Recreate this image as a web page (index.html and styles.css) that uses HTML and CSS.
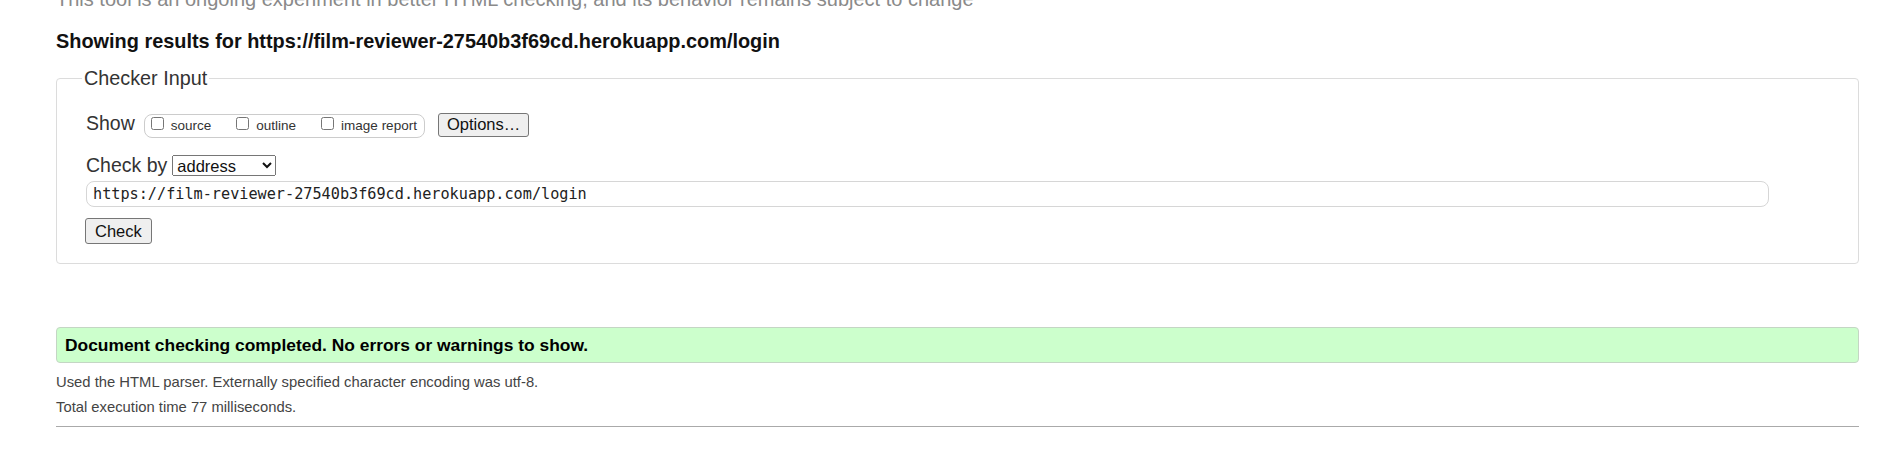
FILE: index.html
```html
<!DOCTYPE html>
<html lang="en">
<head>
<meta charset="utf-8">
<title>Nu Html Checker</title>
<link rel="stylesheet" href="styles.css">
</head>
<body>
<div class="page">
  <p class="intro">This tool is an ongoing experiment in better HTML checking, and its behavior remains subject to change</p>
  <h2 class="results">Showing results for https://film-reviewer-27540b3f69cd.herokuapp.com/login</h2>
  <fieldset class="checker">
    <legend class="checker-legend">Checker Input</legend>
    <div class="row show-row">
      <span class="row-label">Show</span>
      <span class="show-group">
        <label class="opt"><input type="checkbox" class="cb"><span>source</span></label>
        <label class="opt"><input type="checkbox" class="cb"><span>outline</span></label>
        <label class="opt"><input type="checkbox" class="cb"><span>image report</span></label>
      </span>
      <button type="button" class="btn btn-options">Options…</button>
    </div>
    <div class="row checkby-row">
      <span class="row-label">Check by</span>
      <select class="checkby-select">
        <option>address</option>
        <option>file upload</option>
        <option>text input</option>
      </select>
    </div>
    <input class="url" type="text" value="https://film-reviewer-27540b3f69cd.herokuapp.com/login">
    <div class="submit-row"><button type="button" class="btn btn-check">Check</button></div>
  </fieldset>
  <p class="success">Document checking completed. No errors or warnings to show.</p>
  <p class="meta">Used the HTML parser. Externally specified character encoding was utf-8.</p>
  <p class="meta">Total execution time 77 milliseconds.</p>
  <hr class="rule">
</div>
</body>
</html>
```

FILE: styles.css
```css
html, body {
  margin: 0;
  padding: 0;
  background: #ffffff;
  overflow: hidden;
}

body {
  font-family: "Liberation Sans", Arial, sans-serif;
  color: #222222;
}

.page {
  padding: 0 23px 0 56px;
}

.intro {
  margin: -12px 0 0 0;
  font-size: 20px;
  line-height: 23px;
  color: #8a8a8a;
}

.results {
  margin: 19px 0 0 0;
  font-size: 19.9px;
  line-height: 23px;
  font-weight: bold;
  color: #111111;
}

.checker {
  margin: 14px 0 0 0;
  padding: 0 30px 19px 29px;
  border: 1px solid #dcdcdc;
  border-radius: 4px;
  min-width: 0;
}

.checker-legend {
  margin-left: -4px;
  padding: 0 2px;
  font-size: 19.8px;
  line-height: 23px;
  color: #333333;
}

.row {
  display: flex;
  align-items: baseline;
}

.row-label {
  font-size: 19.5px;
  line-height: 22px;
  color: #333333;
}

.show-row {
  margin-top: 22px;
}

.show-group {
  display: inline-flex;
  align-items: baseline;
  margin-left: 9px;
  padding: 2px 7px 3px 6px;
  border: 1px solid #cccccc;
  border-radius: 8px;
  font-size: 13.5px;
  line-height: 16px;
  color: #333333;
}

.opt {
  display: inline-flex;
  align-items: baseline;
}

.opt + .opt {
  margin-left: 25px;
}

.cb {
  width: 13px;
  height: 13px;
  margin: 0 7px 3px 0;
}

.btn {
  box-sizing: border-box;
  font-family: "Liberation Sans", Arial, sans-serif;
  font-size: 16.5px;
  line-height: 19px;
  color: #111111;
  background: #efefef;
  border: 1px solid #767676;
  border-radius: 3px;
}

.btn-options {
  height: 24px;
  margin-left: 13px;
  padding: 0 8px;
}

.checkby-row {
  margin-top: 16px;
}

.checkby-select {
  box-sizing: border-box;
  width: 104px;
  height: 21px;
  margin-left: 5px;
  font-family: "Liberation Sans", Arial, sans-serif;
  font-size: 16.5px;
  color: #111111;
}

.url {
  display: block;
  box-sizing: border-box;
  width: 1683px;
  height: 26px;
  margin: 5px 0 0 0;
  padding: 0 6px;
  border: 1px solid #d6d6d6;
  border-radius: 8px;
  font-family: "DejaVu Sans Mono", "Liberation Mono", monospace;
  font-size: 15.2px;
  color: #222222;
}

.submit-row {
  margin-top: 11px;
  display: flex;
}

.btn-check {
  height: 26px;
  margin-left: -1px;
  padding: 0 9px;
}

.success {
  margin: 63px 0 0 0;
  padding: 0 8px;
  border: 1px solid #c4d6c4;
  border-radius: 4px;
  background: #ccffcc;
  font-size: 17.4px;
  line-height: 34px;
  font-weight: bold;
  color: #000000;
}

.meta {
  margin: 0;
  font-size: 14.8px;
  line-height: 25px;
  color: #444444;
}

.success + .meta {
  margin-top: 7px;
}

.rule {
  margin: 6px 0 0 0;
  border: 0;
  border-top: 1px solid #aaaaaa;
  height: 0;
}
```
